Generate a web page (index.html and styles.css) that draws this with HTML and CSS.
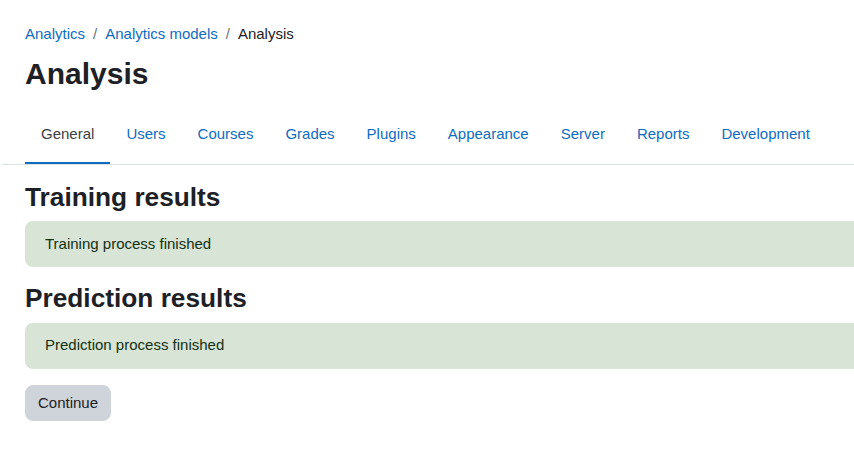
FILE: index.html
```html
<!DOCTYPE html>
<html lang="en">
<head>
<meta charset="utf-8">
<title>Analysis</title>
<link rel="stylesheet" href="styles.css">
</head>
<body>
<div class="page">
  <header class="page-header">
    <nav class="breadcrumb" aria-label="Navigation bar">
      <a href="#" class="crumb">Analytics</a>
      <span class="sep">/</span>
      <a href="#" class="crumb">Analytics models</a>
      <span class="sep">/</span>
      <span class="crumb current">Analysis</span>
    </nav>
    <h1 class="page-title">Analysis</h1>
  </header>
  <nav class="tabs">
    <a href="#" class="tab active">General</a>
    <a href="#" class="tab">Users</a>
    <a href="#" class="tab">Courses</a>
    <a href="#" class="tab">Grades</a>
    <a href="#" class="tab">Plugins</a>
    <a href="#" class="tab">Appearance</a>
    <a href="#" class="tab">Server</a>
    <a href="#" class="tab">Reports</a>
    <a href="#" class="tab">Development</a>
  </nav>
  <main class="content">
    <h3 class="section-title">Training results</h3>
    <div class="alert">Training process finished</div>
    <h3 class="section-title">Prediction results</h3>
    <div class="alert">Prediction process finished</div>
    <button type="button" class="btn">Continue</button>
  </main>
</div>
</body>
</html>
```
FILE: styles.css
```css
html, body {
  margin: 0;
  padding: 0;
  overflow: hidden;
  background: #fff;
}
body {
  font-family: "Liberation Sans", Arial, sans-serif;
  font-size: 15px;
  line-height: 1.5;
  color: #1d2125;
}
.page {
  padding: 23px 0 0 25px;
}
.breadcrumb {
  display: flex;
  align-items: center;
  height: 22.5px;
}
.crumb {
  color: #0f6cbf;
  text-decoration: none;
}
.crumb.current {
  color: #1d2125;
}
.sep {
  color: #6a737b;
  padding: 0 8px;
}
.page-title {
  margin: 10.5px 0 0;
  font-size: 30px;
  font-weight: 700;
  line-height: 1.2;
}
.tabs {
  display: flex;
  margin: 13px 0 0 -23px;
  padding-left: 23px;
  border-bottom: 1px solid #dee2e6;
  overflow: hidden;
}
.tab {
  display: flex;
  align-items: center;
  box-sizing: border-box;
  height: 60px;
  padding: 1.5px 16px 0;
  margin-bottom: -1px;
  border-bottom: 3px solid transparent;
  color: #0f6cbf;
  text-decoration: none;
  white-space: nowrap;
}
.tab.active {
  color: #3c4045;
  border-bottom-color: #0f6cbf;
}
.content {
  padding-top: 16.6px;
}
.section-title {
  margin: 0 0 8px;
  font-size: 26.25px;
  font-weight: 700;
  line-height: 1.2;
}
.alert {
  padding: 11.75px 20px;
  margin-bottom: 16px;
  border-radius: 8px 0 0 8px;
  background: #d7e4d6;
  color: #153114;
}
.btn {
  font-family: inherit;
  font-size: 15px;
  line-height: 1.5;
  padding: 6px 12px;
  border: 1px solid #ced4da;
  border-radius: 8px;
  background: #ced4da;
  color: #1d2125;
  cursor: pointer;
}
```
